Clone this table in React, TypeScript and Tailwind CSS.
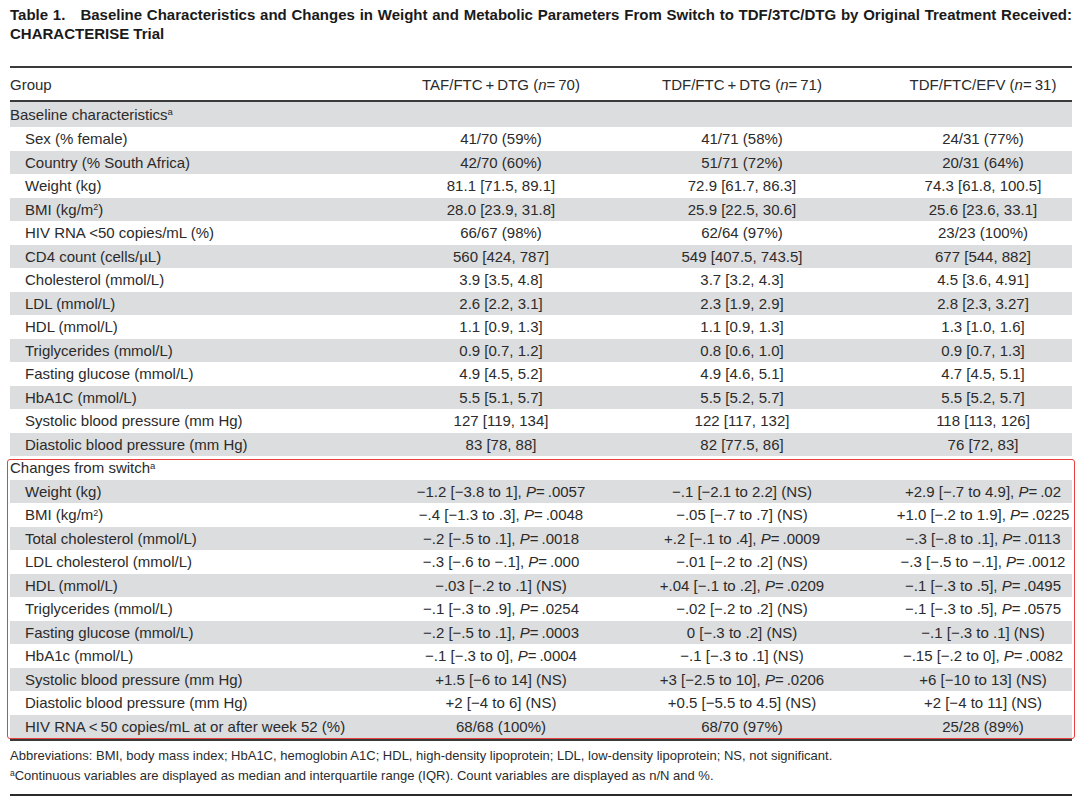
import type { ReactNode } from 'react'

type Row = { label: ReactNode; cells: string[] }

const baseline: Row[] = [
  { label: 'Sex (% female)', cells: ['41/70 (59%)', '41/71 (58%)', '24/31 (77%)'] },
  { label: 'Country (% South Africa)', cells: ['42/70 (60%)', '51/71 (72%)', '20/31 (64%)'] },
  { label: 'Weight (kg)', cells: ['81.1 [71.5, 89.1]', '72.9 [61.7, 86.3]', '74.3 [61.8, 100.5]'] },
  {
    label: (
      <>
        BMI (kg/m<sup className="text-[9px]">2</sup>)
      </>
    ),
    cells: ['28.0 [23.9, 31.8]', '25.9 [22.5, 30.6]', '25.6 [23.6, 33.1]'],
  },
  { label: 'HIV RNA <50 copies/mL (%)', cells: ['66/67 (98%)', '62/64 (97%)', '23/23 (100%)'] },
  { label: 'CD4 count (cells/µL)', cells: ['560 [424, 787]', '549 [407.5, 743.5]', '677 [544, 882]'] },
  { label: 'Cholesterol (mmol/L)', cells: ['3.9 [3.5, 4.8]', '3.7 [3.2, 4.3]', '4.5 [3.6, 4.91]'] },
  { label: 'LDL (mmol/L)', cells: ['2.6 [2.2, 3.1]', '2.3 [1.9, 2.9]', '2.8 [2.3, 3.27]'] },
  { label: 'HDL (mmol/L)', cells: ['1.1 [0.9, 1.3]', '1.1 [0.9, 1.3]', '1.3 [1.0, 1.6]'] },
  { label: 'Triglycerides (mmol/L)', cells: ['0.9 [0.7, 1.2]', '0.8 [0.6, 1.0]', '0.9 [0.7, 1.3]'] },
  { label: 'Fasting glucose (mmol/L)', cells: ['4.9 [4.5, 5.2]', '4.9 [4.6, 5.1]', '4.7 [4.5, 5.1]'] },
  { label: 'HbA1C (mmol/L)', cells: ['5.5 [5.1, 5.7]', '5.5 [5.2, 5.7]', '5.5 [5.2, 5.7]'] },
  { label: 'Systolic blood pressure (mm Hg)', cells: ['127 [119, 134]', '122 [117, 132]', '118 [113, 126]'] },
  { label: 'Diastolic blood pressure (mm Hg)', cells: ['83 [78, 88]', '82 [77.5, 86]', '76 [72, 83]'] },
]

const changes: Row[] = [
  { label: 'Weight (kg)', cells: ['−1.2 [−3.8 to 1], P=.0057', '−.1 [−2.1 to 2.2] (NS)', '+2.9 [−.7 to 4.9], P=.02'] },
  {
    label: (
      <>
        BMI (kg/m<sup className="text-[9px]">2</sup>)
      </>
    ),
    cells: ['−.4 [−1.3 to .3], P=.0048', '−.05 [−.7 to .7] (NS)', '+1.0 [−.2 to 1.9], P=.0225'],
  },
  { label: 'Total cholesterol (mmol/L)', cells: ['−.2 [−.5 to .1], P=.0018', '+.2 [−.1 to .4], P=.0009', '−.3 [−.8 to .1], P=.0113'] },
  { label: 'LDL cholesterol (mmol/L)', cells: ['−.3 [−.6 to −.1], P=.000', '−.01 [−.2 to .2] (NS)', '−.3 [−.5 to −.1], P=.0012'] },
  { label: 'HDL (mmol/L)', cells: ['−.03 [−.2 to .1] (NS)', '+.04 [−.1 to .2], P=.0209', '−.1 [−.3 to .5], P=.0495'] },
  { label: 'Triglycerides (mmol/L)', cells: ['−.1 [−.3 to .9], P=.0254', '−.02 [−.2 to .2] (NS)', '−.1 [−.3 to .5], P=.0575'] },
  { label: 'Fasting glucose (mmol/L)', cells: ['−.2 [−.5 to .1], P=.0003', '0 [−.3 to .2] (NS)', '−.1 [−.3 to .1] (NS)'] },
  { label: 'HbA1c (mmol/L)', cells: ['−.1 [−.3 to 0], P=.0004', '−.1 [−.3 to .1] (NS)', '−.15 [−.2 to 0], P=.0082'] },
  { label: 'Systolic blood pressure (mm Hg)', cells: ['+1.5 [−6 to 14] (NS)', '+3 [−2.5 to 10], P=.0206', '+6 [−10 to 13] (NS)'] },
  { label: 'Diastolic blood pressure (mm Hg)', cells: ['+2 [−4 to 6] (NS)', '+0.5 [−5.5 to 4.5] (NS)', '+2 [−4 to 11] (NS)'] },
  { label: 'HIV RNA\u2009<\u200950 copies/mL at or after week 52 (%)', cells: ['68/68 (100%)', '68/70 (97%)', '25/28 (89%)'] },
]

// render "P=" with an italic P
function fmt(s: string) {
  const i = s.indexOf('P=')
  if (i < 0) return s
  return (
    <>
      {s.slice(0, i)}
      <i>P</i>
      {'=\u2009' + s.slice(i + 2)}
    </>
  )
}

const gridCls = 'grid grid-cols-[370px_242px_240px_1fr] items-center whitespace-nowrap'

function TableRow({ row, gray }: { row: Row; gray: boolean }) {
  return (
    <div className={`${gridCls} h-[23.5px] ${gray ? 'bg-[#dcdddf]' : ''}`}>
      <div className="pl-[15px]">{row.label}</div>
      <div className="text-center">{fmt(row.cells[0])}</div>
      <div className="text-center">{fmt(row.cells[1])}</div>
      <div className="pl-[32px] text-center">{fmt(row.cells[2])}</div>
    </div>
  )
}

function Sup({ children }: { children: ReactNode }) {
  return <sup className="text-[9.5px]">{children}</sup>
}

export default function App() {
  const headerCol = (name: string, n: number) => (
    <>
      {name} (<i>n</i>
      {'=\u2009' + n})
    </>
  )

  return (
    <div className="min-h-screen bg-white pt-[5px] pr-[8px] pl-[10px] font-['Liberation_Sans',Arial,sans-serif] text-[15px] leading-none text-[#2b2b2b]">
      <h1 className="text-justify font-['Liberation_Sans_Narrow','Liberation_Sans',sans-serif] text-[15px] leading-[19px] font-bold text-[#1a1a1a] [font-stretch:condensed]">
        Table 1.{'\u2002\u2002'}Baseline Characteristics and Changes in Weight and Metabolic Parameters From Switch
        to TDF/3TC/DTG by Original Treatment Received: CHARACTERISE Trial
      </h1>

      <div className="mt-[23px] border-t-2 border-[#3a3a3a]">
        <div className={`${gridCls} h-[34px] items-end border-b-2 border-[#3a3a3a] pb-[8px]`}>
          <div>Group</div>
          <div className="text-center">{headerCol('TAF/FTC\u2009+\u2009DTG', 70)}</div>
          <div className="text-center">{headerCol('TDF/FTC\u2009+\u2009DTG', 71)}</div>
          <div className="pl-[32px] text-center">{headerCol('TDF/FTC/EFV', 31)}</div>
        </div>

        <div className="flex h-[25px] items-center bg-[#dcdddf]">
          <span>
            Baseline characteristics<Sup>a</Sup>
          </span>
        </div>
        {baseline.map((r, i) => (
          <TableRow key={i} row={r} gray={i % 2 === 1} />
        ))}

        <div className="relative">
          <div className="flex h-[23.5px] items-center">
            <span>
              Changes from switch<Sup>a</Sup>
            </span>
          </div>
          {changes.map((r, i) => (
            <TableRow key={i} row={r} gray={i % 2 === 0} />
          ))}
          <div className="pointer-events-none absolute top-[3px] right-[-3px] bottom-[-1px] left-[-3px] rounded-[3px] border border-[#e8403c]" />
        </div>

        <div className="mt-[1px] border-t-2 border-[#3a3a3a]" />
      </div>

      <div className="pt-[5px] text-[13px] leading-[20px] text-[#2b2b2b]">
        <p>
          Abbreviations: BMI, body mass index; HbA1C, hemoglobin A1C; HDL, high-density lipoprotein; LDL,
          low-density lipoprotein; NS, not significant.
        </p>
        <p>
          <sup className="text-[8.5px]">a</sup>Continuous variables are displayed as median and interquartile range
          (IQR). Count variables are displayed as n/N and %.
        </p>
      </div>
      <div className="mt-[8px] border-t-2 border-[#2b2b2b]" />
    </div>
  )
}
